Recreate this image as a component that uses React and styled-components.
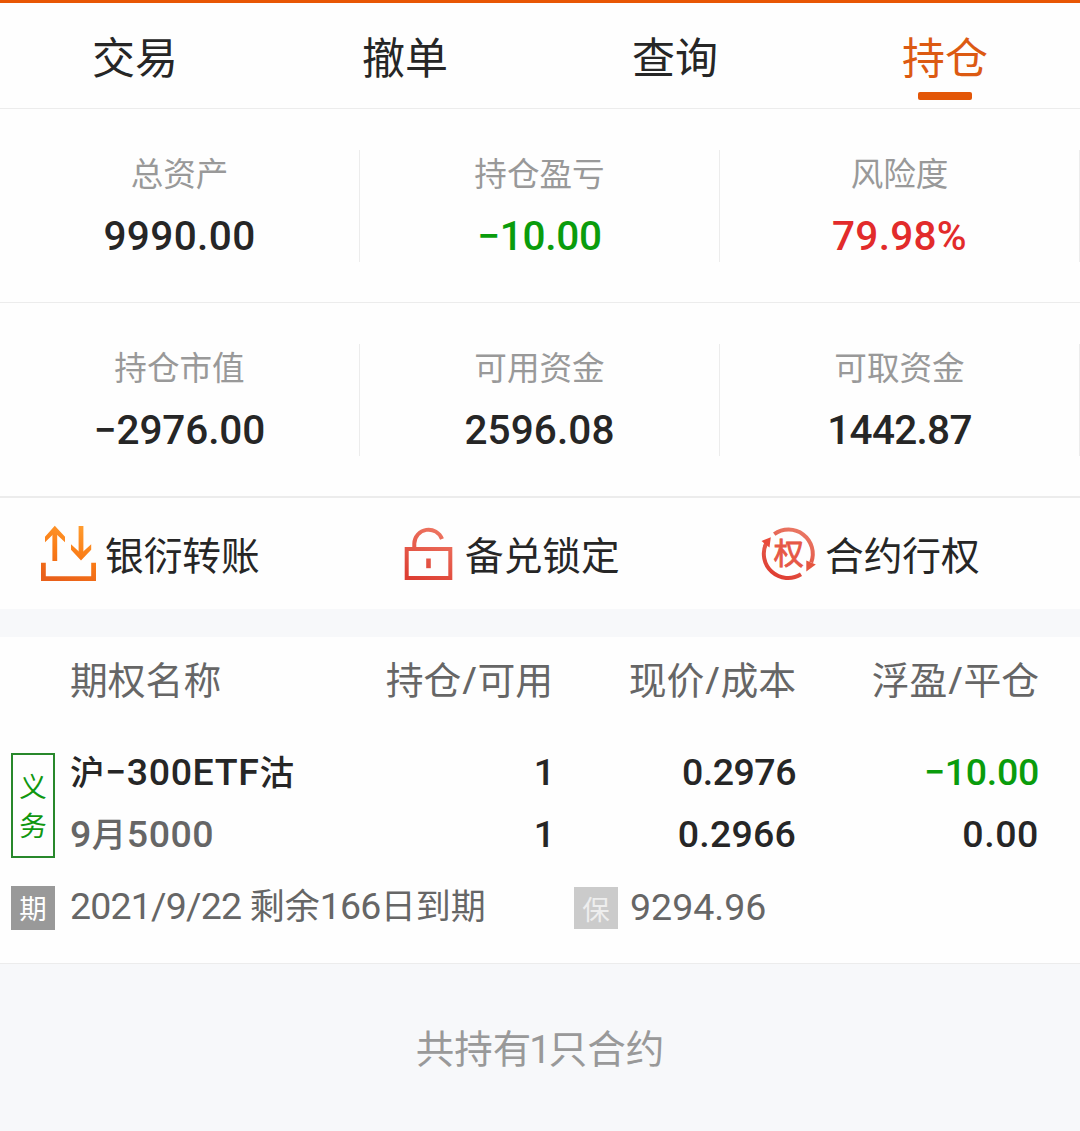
import React from "react";
import styled, { createGlobalStyle } from "styled-components";

const GlobalStyle = createGlobalStyle`
  * { box-sizing: border-box; }
  body {
    margin: 0;
    background: #f7f8fa;
    color: #262626;
    font-family: "Noto Sans", "Noto Sans CJK SC", sans-serif;
  }
`;

const NUMERIC = `"Roboto", "Noto Sans CJK SC", sans-serif`;

const Page = styled.main`
  width: 1080px;
  min-height: 1131px;
  border-top: 3px solid #e85604;
  background: #f7f8fa;
`;

const TabBar = styled.nav`
  display: grid;
  grid-template-columns: repeat(4, 1fr);
  height: 106px;
  background: #fefefe;
  border-bottom: 1px solid #ececec;
`;

const Tab = styled.div`
  display: flex;
  flex-direction: column;
  align-items: center;
  padding-top: 25px;
  font-size: 43px;
  line-height: 60px;
  color: ${(p) => (p.$active ? "#dc5a12" : "#262626")};

  &::after {
    content: "";
    width: 54px;
    height: 8px;
    margin-top: 4px;
    border-radius: 2px;
    background: ${(p) => (p.$active ? "#e35607" : "transparent")};
  }
`;

const StatRow = styled.section`
  display: grid;
  grid-template-columns: repeat(3, 1fr);
  height: ${(p) => (p.$last ? 195 : 194)}px;
  padding-top: 41px;
  background: #fefefe;
  border-bottom: ${(p) => (p.$last ? 2 : 1)}px solid #ececec;
`;

const Stat = styled.div`
  display: flex;
  flex-direction: column;
  align-items: center;
  height: 112px;
  border-right: 1px solid #ececec;
`;

const StatLabel = styled.span`
  font-size: 32.6px;
  line-height: 48px;
  color: #999;
`;

const StatValue = styled.span`
  margin-top: 10px;
  font-family: ${NUMERIC};
  font-size: 40.5px;
  font-weight: 500;
  line-height: 56px;
  letter-spacing: ${(p) => p.$track || 0}px;
  color: ${(p) => p.$color || "#262626"};
`;

const Actions = styled.section`
  display: grid;
  grid-template-columns: repeat(3, 1fr);
  height: 111px;
  background: #fefefe;
`;

const Action = styled.div`
  display: flex;
  align-items: center;
  gap: 5px;
  padding-left: 36px;
  font-size: 38.7px;
  line-height: 56px;

  svg {
    flex: none;
  }
`;

const ActionLabel = styled.span`
  padding-top: 2px;
`;

const Holdings = styled.section`
  height: 327px;
  margin-top: 28px;
  padding-top: 14px;
  background: #fefefe;
  border-bottom: 1px solid #ececec;
`;

const Columns = styled.div`
  display: grid;
  grid-template-columns: 243px 240px 243px 243px;
`;

const HeadRow = styled(Columns)`
  padding-left: 70px;
  font-size: 37.8px;
  line-height: 58px;
  color: #666;
`;

const Cell = styled.span`
  text-align: ${(p) => (p.$left ? "left" : "right")};
  white-space: nowrap;
`;

const Slash = styled.span`
  margin: 0 1px;
`;

const Position = styled.div`
  display: grid;
  grid-template-columns: 44px 1fr;
  column-gap: 15px;
  padding-left: 11px;
  margin-top: 32px;
`;

const SideTag = styled.div`
  display: flex;
  flex-direction: column;
  align-items: center;
  height: 105px;
  margin-top: 12px;
  padding-top: 12px;
  border: 2px solid #28882b;
  font-size: 27.5px;
  line-height: 39px;
  color: #109710;
`;

const Lines = styled(Columns)`
  grid-auto-rows: 62px;
  padding-bottom: 2px;
  font-family: ${NUMERIC};
  font-size: 37.5px;
  font-weight: 500;
  line-height: 62px;
`;

const Value = styled(Cell)`
  letter-spacing: ${(p) => p.$track || 0}px;
  color: ${(p) => p.$color || "#262626"};
`;

const Han = styled.span`
  font-size: 34.5px;
  font-weight: 500;
`;

const Details = styled.div`
  display: grid;
  grid-template-columns: 44px 519px 44px 1fr;
  align-items: center;
  margin-top: 8px;
  padding-left: 11px;
  font-family: ${NUMERIC};
  font-size: 37.5px;
  line-height: 62px;
  color: #666;
`;

const Badge = styled.span`
  display: block;
  height: ${(p) => (p.$pale ? 42 : 44)}px;
  background: ${(p) => (p.$pale ? "#cbcbcb" : "#999")};
  color: ${(p) => (p.$pale ? "#eee" : "#fff")};
  font-family: "Noto Sans", "Noto Sans CJK SC", sans-serif;
  font-size: 27.5px;
  line-height: 45px;
  text-align: center;
`;

const DetailText = styled.span`
  padding-bottom: 2px;
  padding-left: ${(p) => p.$indent}px;
  letter-spacing: ${(p) => p.$track || 0}px;
  white-space: nowrap;
`;

const SmallHan = styled.span`
  font-size: 35px;
  letter-spacing: 0;
`;

const Footer = styled.footer`
  padding-top: 56px;
  text-align: center;
  font-family: ${NUMERIC};
  font-size: 38.5px;
  line-height: 60px;
  color: #999;
`;

const One = styled.span`
  margin: 0 -2px;
`;

const TransferIcon = () => (
  <svg width="64" height="64" viewBox="36 522 64 64" fill="none" strokeWidth="4.8">
    <defs>
      <linearGradient id="transfer" gradientUnits="userSpaceOnUse" x1="80" y1="526" x2="60" y2="581">
        <stop offset="0" stopColor="#ff9b2e" />
        <stop offset="0.5" stopColor="#fa7c16" />
        <stop offset="1" stopColor="#e9601a" />
      </linearGradient>
    </defs>
    <g stroke="url(#transfer)">
      <path d="M43.4 562.7V578.7H93.6V562.7" />
      <path d="M54.8 561V530" />
      <path d="M81 526V557" />
    </g>
    <g fill="url(#transfer)">
      <path d="M54.8 525.8L65 536.8V542.2L54.8 532.8L45 542.2V536.8Z" />
      <path d="M81 560.6L91.2 549.8V544.2L81 553.6L71 544.2V549.8Z" />
    </g>
  </svg>
);

const LockIcon = () => (
  <svg width="64" height="64" viewBox="396 522 64 64" fill="none" strokeWidth="4">
    <defs>
      <linearGradient id="lock" gradientUnits="userSpaceOnUse" x1="440" y1="527" x2="415" y2="580">
        <stop offset="0" stopColor="#ee7763" />
        <stop offset="1" stopColor="#dd3e32" />
      </linearGradient>
    </defs>
    <g stroke="url(#lock)">
      <path d="M406.7 549H450.3V578H406.7Z" />
      <path d="M414.3 548V543.5A14.3 14.3 0 0 1 442 539" />
      <path d="M428.5 558.5V568.2" strokeWidth="4.6" />
    </g>
  </svg>
);

const ExerciseIcon = () => (
  <svg width="64" height="64" viewBox="756 522 64 64">
    <defs>
      <linearGradient id="exercise" gradientUnits="userSpaceOnUse" x1="800" y1="527" x2="775" y2="580">
        <stop offset="0" stopColor="#ea7a66" />
        <stop offset="1" stopColor="#de3a2f" />
      </linearGradient>
    </defs>
    <g stroke="url(#exercise)" strokeWidth="4" fill="none">
      <path d="M774.2 534.2A24.3 24.3 0 0 1 811.2 562.5" />
      <path d="M766.3 543A24.3 24.3 0 0 0 801 574.3" />
    </g>
    <path d="M761.5 541L770.8 537.2L769.5 547.5Z" fill="#e94a3a" />
    <path d="M806.3 560.5L815.8 564.5L806.3 571.5Z" fill="#e5553f" />
    <text x="788.8" y="564" textAnchor="middle" fontSize="30" fontWeight="400" fontFamily="Noto Sans CJK SC, sans-serif" fill="#e65746" stroke="#e65746" strokeWidth="0.8">权</text>
  </svg>
);

const GREEN = "#0a9c0c";
const RED = "#e22b2b";

const stats = [
  [
    { label: "总资产", value: "9990.00", track: 0.4 },
    { label: "持仓盈亏", value: "−10.00", color: GREEN, track: -0.3 },
    { label: "风险度", value: "79.98%", color: RED, track: 0.3 },
  ],
  [
    { label: "持仓市值", value: "−2976.00", track: -0.1 },
    { label: "可用资金", value: "2596.08", track: 0.1 },
    { label: "可取资金", value: "1442.87", track: -0.7 },
  ],
];

const actions = [
  { label: "银衍转账", Icon: TransferIcon },
  { label: "备兑锁定", Icon: LockIcon },
  { label: "合约行权", Icon: ExerciseIcon },
];

export default function App() {
  return (
    <>
      <GlobalStyle />
      <Page>
        <TabBar>
          {["交易", "撤单", "查询", "持仓"].map((name) => (
            <Tab key={name} $active={name === "持仓"}>{name}</Tab>
          ))}
        </TabBar>
        {stats.map((row, i) => (
          <StatRow key={i} $last={i === stats.length - 1}>
            {row.map((s) => (
              <Stat key={s.label}>
                <StatLabel>{s.label}</StatLabel>
                <StatValue $color={s.color} $track={s.track}>{s.value}</StatValue>
              </Stat>
            ))}
          </StatRow>
        ))}
        <Actions>
          {actions.map(({ label, Icon }) => (
            <Action key={label}><Icon /><ActionLabel>{label}</ActionLabel></Action>
          ))}
        </Actions>
        <Holdings>
          <HeadRow>
            <Cell $left>期权名称</Cell>
            <Cell>持仓<Slash>/</Slash>可用</Cell>
            <Cell>现价<Slash>/</Slash>成本</Cell>
            <Cell>浮盈<Slash>/</Slash>平仓</Cell>
          </HeadRow>
          <Position>
            <SideTag><span>义</span><span>务</span></SideTag>
            <Lines>
              <Value $left $track={0.6}><Han>沪</Han>−300ETF<Han>沽</Han></Value>
              <Value $track={-2}>1</Value>
              <Value $track={-0.5}>0.2976</Value>
              <Value $color={GREEN} $track={-0.3}>−10.00</Value>
              <Value $left $color="#666" $track={0.5}>9<Han>月</Han>5000</Value>
              <Value $track={-2}>1</Value>
              <Value $track={0.2}>0.2966</Value>
              <Value $track={0.6}>0.00</Value>
            </Lines>
          </Position>
          <Details>
            <Badge>期</Badge>
            <DetailText $indent={15} $track={-0.8}>2021/9/22 <SmallHan>剩余</SmallHan>166<SmallHan>日到期</SmallHan></DetailText>
            <Badge $pale>保</Badge>
            <DetailText $indent={12}>9294.96</DetailText>
          </Details>
        </Holdings>
        <Footer>共持有<One>1</One>只合约</Footer>
      </Page>
    </>
  );
}
